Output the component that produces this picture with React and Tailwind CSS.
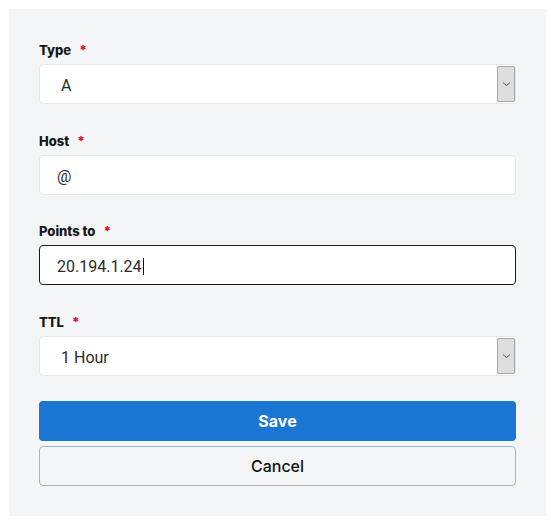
import React from "react";

function Label({ children }) {
  return (
    <div className="flex items-center h-[20px] mb-[4px] text-[13px] font-extrabold text-[#161616] leading-[20px]">
      <span>{children}</span>
      <span className="ml-[8px] text-[#e4002b] text-[13px]">*</span>
    </div>
  );
}

function SelectBox({ value }) {
  return (
    <div className="flex h-[40px] bg-white border border-[#e4e6ea] rounded-[4px] overflow-hidden">
      <div className="flex-1 flex items-center pl-[21px] pt-[3px] text-[16px] text-[#2b2b2b]" style={{ fontFamily: "Roboto, sans-serif" }}>{value}</div>
      <div className="w-[18px] my-[1px] flex items-center justify-center bg-[#dedede] border border-[#a8a8a8] rounded-[2px]">
        <svg width="9" height="6" viewBox="0 0 9 6" fill="none">
          <path d="M1 1.5 L4.5 4.5 L8 1.5" stroke="#555" strokeWidth="1" />
        </svg>
      </div>
    </div>
  );
}

export default function App() {
  return (
    <div className="w-[551px] h-[530px] bg-white pt-[9px] pl-[9px]" style={{ fontFamily: "Inter, 'Noto Sans', sans-serif" }}>
      <div className="w-[537px] h-[507px] bg-[#f4f5f7] px-[30px] pt-[31px] flex flex-col">
        <Label>Type</Label>
        <SelectBox value="A" />
        <div className="h-[27px]" />
        <Label>Host</Label>
        <div className="flex items-center h-[40px] bg-white border border-[#e4e6ea] rounded-[4px] pl-[17px] pt-[3px] text-[16px] text-[#2b2b2b]" style={{ fontFamily: "Roboto, sans-serif" }}>@</div>
        <div className="h-[26px]" />
        <Label>Points to</Label>
        <div className="flex items-center h-[40px] bg-white border border-[#1a1a1a] rounded-[4px] pl-[17px] pt-[3px] text-[16px] text-[#2b2b2b]" style={{ fontFamily: "Roboto, sans-serif" }}>
          <span>20.194.1.24</span>
          <span className="w-[1px] h-[17px] bg-[#111] ml-[1px]" />
        </div>
        <div className="h-[27px]" />
        <Label>TTL</Label>
        <SelectBox value="1 Hour" />
        <div className="h-[25px]" />
        <button className="h-[40px] w-full rounded-[4px] bg-[#1976d2] text-white text-[16px] font-bold">Save</button>
        <button className="mt-[5px] h-[40px] w-full rounded-[4px] border border-[#a9b4c2] bg-[#f4f5f7] text-[#111] text-[16px] font-medium">Cancel</button>
      </div>
    </div>
  );
}
